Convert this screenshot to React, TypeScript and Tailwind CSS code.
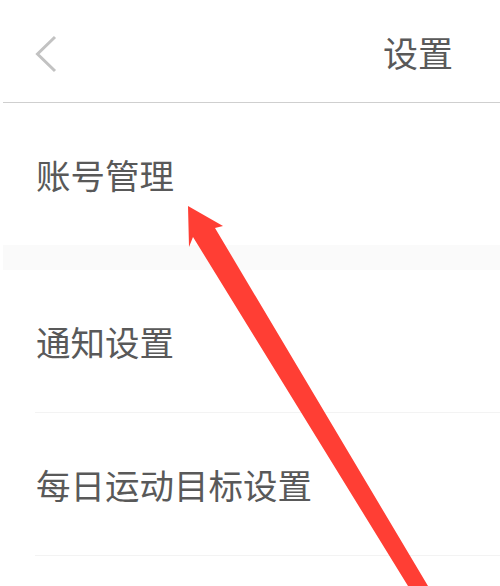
const font = { fontFamily: '"Noto Sans CJK SC", "Noto Sans", sans-serif' }

function Row({ label, divider }: { label: string; divider?: boolean }) {
  return (
    <div className="relative flex h-[143px] items-center pl-[36px]">
      <span className="text-[34.5px] leading-none text-[#595959]">{label}</span>
      {divider && <div className="absolute bottom-0 left-[35px] right-0 h-px bg-[#f3f3f3]" />}
    </div>
  )
}

export default function App() {
  return (
    <div className="relative h-[586px] w-[500px] overflow-hidden bg-white" style={font}>
      <header className="ml-[3px] flex h-[103px] items-center justify-between border-b border-[#cfcfcf] pl-[31px] pr-[47px]">
        <svg width="24" height="38" viewBox="0 0 24 38" fill="none" className="mt-[6px]">
          <path d="M21 2 L3.5 19 L21 36" stroke="#c2c2c2" strokeWidth="3" />
        </svg>
        <span className="text-[35px] leading-none text-[#595959]">设置</span>
      </header>
      <div className="flex h-[142px] items-center pl-[36px]">
        <span className="text-[34.5px] leading-none text-[#595959]">账号管理</span>
      </div>
      <div className="ml-[3px] h-[25px] bg-[#fafafa]" />
      <Row label="通知设置" divider />
      <Row label="每日运动目标设置" divider />

      <svg className="pointer-events-none absolute left-0 top-0" width="500" height="586" viewBox="0 0 500 586">
        <polygon
          points="188,206 223,226 215,228 428,586 408,586 193,237 189,247"
          fill="#ff3e34"
        />
      </svg>
    </div>
  )
}
